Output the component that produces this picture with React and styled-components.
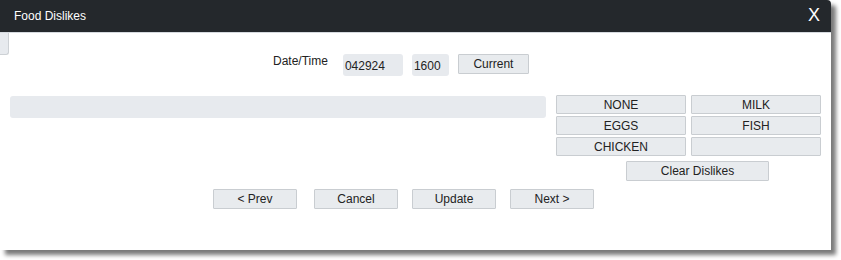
import styled, { createGlobalStyle } from "styled-components";

const Global = createGlobalStyle`
    body{
        margin: 0;
        background: #FFFFFF;
        font-family: "Liberation Sans", Arial, sans-serif;
    }
`;

function App () {
    const dislikes = ["NONE", "MILK", "EGGS", "FISH", "CHICKEN", ""];

    return(
        <>
        <Global/>
        <Page>
            <Dialog>
                <Header>
                    <h3>Food Dislikes</h3>
                    <Close>X</Close>
                </Header>
                <Body>
                    <Stub/>
                    <DateRow>
                        <Label>Date/Time</Label>
                        <Field width={60}>042924</Field>
                        <Field width={37}>1600</Field>
                        <Button width={71}>Current</Button>
                    </DateRow>
                    <Middle>
                        <LongField/>
                        <Side>
                            <Grid>
                                {dislikes.map((item, i) => <Button key={i} height={19}>{item}</Button>)}
                            </Grid>
                            <ClearWrap>
                                <Button width={143}>Clear Dislikes</Button>
                            </ClearWrap>
                        </Side>
                    </Middle>
                    <Footer>
                        <Button width={84}>&lt; Prev</Button>
                        <Button width={84} className="wide">Cancel</Button>
                        <Button width={84}>Update</Button>
                        <Button width={84}>Next &gt;</Button>
                    </Footer>
                </Body>
            </Dialog>
        </Page>
        </>
    )
}

export default App;

const Page = styled.div`
    width: 841px;
    height: 260px;
`;

const Dialog = styled.div`
    width: 831px;
    height: 250px;
    background: #FFFFFF;
    border-top-right-radius: 4px;
    box-shadow: 5px 5px 4px #7a7a7a;
    display: flex;
    flex-direction: column;
    overflow: hidden;
`;

const Header = styled.div`
    height: 33px;
    background: #24282c;
    display: flex;
    justify-content: space-between;
    align-items: center;
    padding: 0 11px 0 14px;
    border-bottom: 1px solid #d6dadf;
    box-sizing: border-box;
    h3{
        margin: 0;
        font-size: 12px;
        font-weight: 400;
        color: #FFFFFF;
    }
`;

const Close = styled.span`
    font-size: 18px;
    font-weight: 400;
    color: #FFFFFF;
    margin-top: -2px;
`;

const Body = styled.div`
    display: flex;
    flex-direction: column;
`;

const Stub = styled.div`
    width: 8px;
    height: 21px;
    background: #e7eaee;
    border: 1px solid #cdd1d5;
    border-left: none;
    border-top: none;
    border-radius: 0 0 3px 0;
`;

const DateRow = styled.div`
    display: flex;
    align-items: flex-start;
    padding-left: 273px;
    margin-top: -1px;
    height: 22px;
    font-size: 12px;
    color: #222222;
`;

const Label = styled.span`
    margin-right: 15px;
    line-height: 14px;
`;

const Field = styled.div`
    width: ${p => p.width}px;
    height: 22px;
    background: #e7eaee;
    border-radius: 3px;
    margin-right: 9px;
    padding-left: 2px;
    box-sizing: border-box;
    line-height: 24px;
`;

const Button = styled.div`
    width: ${p => p.width ? `${p.width}px` : "auto"};
    height: ${p => p.height || 20}px;
    background: #e8ebee;
    border: 1px solid #c9cdd1;
    box-sizing: border-box;
    display: flex;
    justify-content: center;
    align-items: center;
    font-size: 12px;
    color: #222222;
    border-radius: 1px;
`;

const Middle = styled.div`
    display: flex;
    padding: 0 10px;
    margin-top: 19px;
    gap: 10px;
`;

const LongField = styled.div`
    width: 536px;
    height: 22px;
    margin-top: 1px;
    background: #e7eaee;
    border-radius: 3px;
`;

const Side = styled.div`
    display: flex;
    flex-direction: column;
    width: 265px;
`;

const Grid = styled.div`
    display: grid;
    grid-template-columns: 130px 130px;
    column-gap: 5px;
    row-gap: 2px;
`;

const ClearWrap = styled.div`
    display: flex;
    padding-left: 70px;
    margin-top: 5px;
`;

const Footer = styled.div`
    display: flex;
    padding-left: 213px;
    margin-top: 8px;
    gap: 14px;
    .wide{
        margin-left: 3px;
    }
`;
